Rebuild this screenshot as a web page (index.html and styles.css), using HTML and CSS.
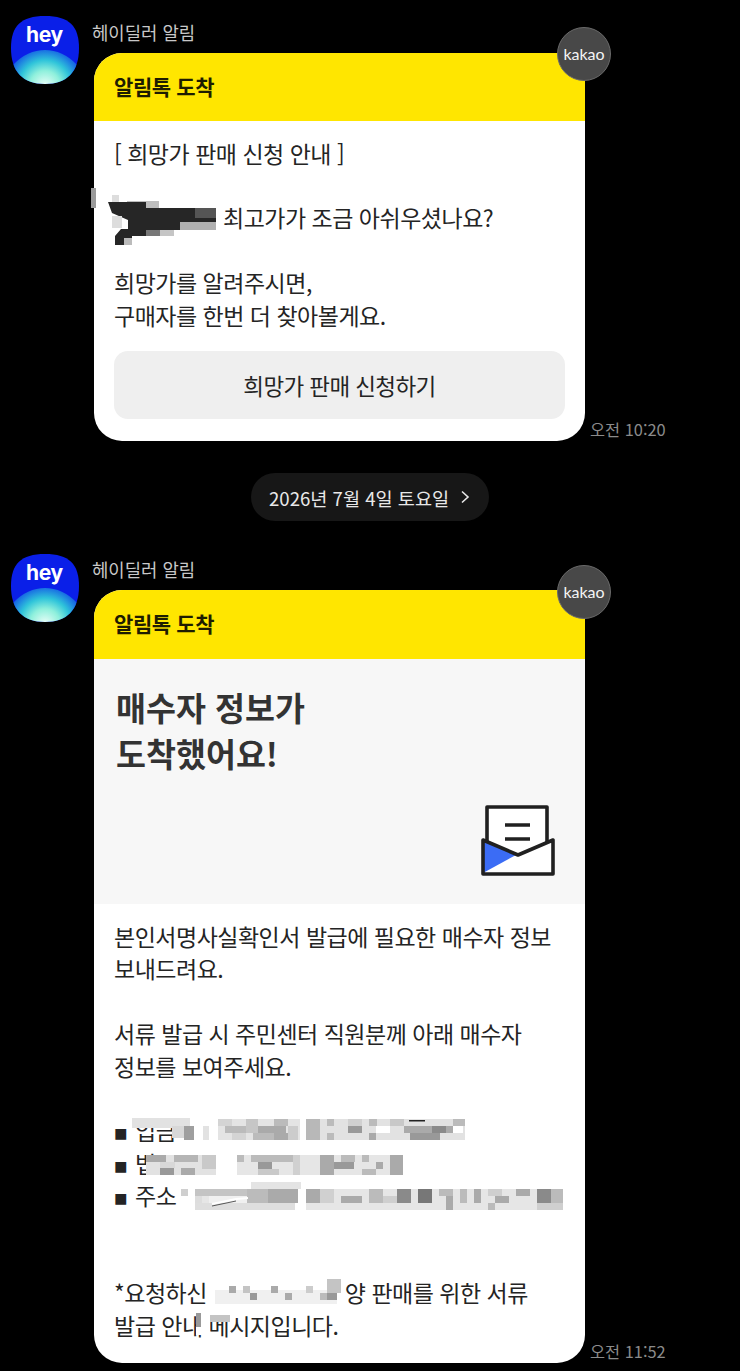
FILE: index.html
```html
<!DOCTYPE html>
<html lang="ko">
<head>
<meta charset="utf-8">
<title>헤이딜러 알림</title>
<link rel="stylesheet" href="styles.css">
</head>
<body>
<main class="chat">
  <section class="msg msg-first">
    <svg class="avatar" viewBox="0 0 68 68" aria-hidden="true">
      <defs>
        <radialGradient id="glowA" gradientUnits="userSpaceOnUse" cx="34" cy="70" r="38">
          <stop offset="0" stop-color="#eefef9"/>
          <stop offset="0.4" stop-color="#8ff0dc"/>
          <stop offset="0.68" stop-color="#2fc4da"/>
          <stop offset="1" stop-color="#1560e4"/>
        </radialGradient>
        <clipPath id="sqA"><path d="M34 0C58 0 68 10 68 32C68 56 56 68 34 68C12 68 0 56 0 32C0 10 10 0 34 0Z"/></clipPath>
      </defs>
      <path d="M34 0C58 0 68 10 68 32C68 56 56 68 34 68C12 68 0 56 0 32C0 10 10 0 34 0Z" fill="#0a1fe8"/>
      <g clip-path="url(#sqA)"><ellipse cx="34" cy="82" rx="44" ry="48" fill="url(#glowA)"/></g>
      <text x="33.5" y="26" class="hey">hey</text>
    </svg>
    <div class="msg-main">
      <div class="name">헤이딜러 알림</div>
      <div class="row">
        <article class="card">
          <header class="card-head">알림톡 도착</header>
          <div class="card-body">
            <p>[ 희망가 판매 신청 안내 ]</p>
            <p class="blank"></p>
            <p class="indent-name">최고가가 조금 아쉬우셨나요?</p>
            <p class="blank"></p>
            <p>희망가를 알려주시면,</p>
            <p>구매자를 한번 더 찾아볼게요.</p>
            <div class="action">희망가 판매 신청하기</div>
          </div>
        </article>
        <time class="time">오전 10:20</time>
        <div class="badge">kakao</div>
      </div>
    </div>
    <svg class="redact" viewBox="0 0 740 260" aria-hidden="true">
      <rect x="91" y="188" width="5" height="20" fill="#9a9a9a"/>
      <rect x="112" y="195" width="7" height="7" fill="#ddd"/>
      <rect x="127" y="201" width="32" height="7" fill="#bdbdbd"/>
      <path d="M108 202H146V208H216V226H180V230H146V236H132V245H115V236L121 229H128V220L112 213Z" fill="#262626"/>
      <rect x="195" y="208" width="21" height="10" fill="#555"/>
      <rect x="180" y="222" width="36" height="8" fill="#b0b0b0"/>
      <rect x="146" y="230" width="14" height="6" fill="#777"/>
      <rect x="160" y="230" width="14" height="6" fill="#c5c5c5"/>
      <rect x="112" y="216" width="10" height="12" fill="#ddd"/>
      <rect x="124" y="238" width="8" height="7" fill="#bbb"/>
    </svg>
  </section>

  <div class="date-wrap">
    <div class="date-pill">2026년 7월 4일 토요일
      <svg class="chev" viewBox="0 0 10 14" aria-hidden="true"><path d="M2 1.5L8 7L2 12.5"/></svg>
    </div>
  </div>

  <section class="msg msg-second">
    <svg class="avatar" viewBox="0 0 68 68" aria-hidden="true">
      <defs>
        <radialGradient id="glowB" gradientUnits="userSpaceOnUse" cx="34" cy="70" r="38">
          <stop offset="0" stop-color="#eefef9"/>
          <stop offset="0.4" stop-color="#8ff0dc"/>
          <stop offset="0.68" stop-color="#2fc4da"/>
          <stop offset="1" stop-color="#1560e4"/>
        </radialGradient>
        <clipPath id="sqB"><path d="M34 0C58 0 68 10 68 32C68 56 56 68 34 68C12 68 0 56 0 32C0 10 10 0 34 0Z"/></clipPath>
      </defs>
      <path d="M34 0C58 0 68 10 68 32C68 56 56 68 34 68C12 68 0 56 0 32C0 10 10 0 34 0Z" fill="#0a1fe8"/>
      <g clip-path="url(#sqB)"><ellipse cx="34" cy="82" rx="44" ry="48" fill="url(#glowB)"/></g>
      <text x="33.5" y="26" class="hey">hey</text>
    </svg>
    <div class="msg-main">
      <div class="name">헤이딜러 알림</div>
      <div class="row">
        <article class="card">
          <header class="card-head">알림톡 도착</header>
          <div class="hero">
            <h2 class="hero-title">매수자 정보가<br>도착했어요!</h2>
            <svg class="mail" viewBox="0 0 74 72" aria-hidden="true">
              <path d="M6 2H66V60H6Z" fill="#fff" stroke="#202020" stroke-width="3.6" stroke-linejoin="round"/>
              <path d="M24 20H49M24 34H49" stroke="#202020" stroke-width="3.4"/>
              <path d="M2 35L37 50L72 35V70H2Z" fill="#fff"/>
              <path d="M2 35L35 50L2 68Z" fill="#3b6cf5"/>
              <path d="M2 35L37 50L72 35V69H2Z" fill="none" stroke="#202020" stroke-width="3.6" stroke-linejoin="round"/>
            </svg>
          </div>
          <div class="card-body card-body-long">
            <p>본인서명사실확인서 발급에 필요한 매수자 정보</p>
            <p>보내드려요.</p>
            <p class="blank"></p>
            <p>서류 발급 시 주민센터 직원분께 아래 매수자</p>
            <p>정보를 보여주세요.</p>
            <p class="blank"></p>
            <p><span class="sq">■</span>입금</p>
            <p><span class="sq">■</span>법</p>
            <p><span class="sq">■</span>주소</p>
            <p class="blank"></p>
            <p class="blank"></p>
            <p>*요청하신 <span class="gap"></span>양 판매를 위한 서류</p>
            <p>발급 안내 메시지입니다.</p>
          </div>
        </article>
        <time class="time">오전 11:52</time>
        <div class="badge">kakao</div>
      </div>
    </div>
    <svg class="mosaic" viewBox="0 554 740 817" aria-hidden="true">
      <g fill="#d4d4d4">
        <rect x="218" y="1119" width="82" height="21" fill="#e4e4e4"/>
        <rect x="306" y="1119" width="159" height="21" fill="#e2e2e2"/>
        <rect x="132" y="1118" width="58" height="10" fill="#e2e2e2"/>
        <rect x="172" y="1126" width="12" height="12" fill="#d8d8d8"/>
        <rect x="184" y="1126" width="10" height="14" fill="#9f9f9f"/>
        <rect x="203" y="1126" width="6" height="14" fill="#e2e2e2"/>
        <rect x="218" y="1119" width="14" height="7"/><rect x="225" y="1126" width="21" height="7" fill="#bbb"/>
        <rect x="232" y="1133" width="14" height="7"/><rect x="246" y="1119" width="12" height="14" fill="#c6c6c6"/>
        <rect x="258" y="1126" width="28" height="7" fill="#aaa"/><rect x="253" y="1133" width="21" height="7" fill="#bbb"/>
        <rect x="274" y="1119" width="14" height="7" fill="#bbb"/><rect x="274" y="1133" width="14" height="7" fill="#aaa"/>
        <rect x="288" y="1126" width="10" height="14" fill="#ccc"/>
        <rect x="306" y="1119" width="14" height="21" fill="#b8b8b8"/><rect x="327" y="1119" width="7" height="7" fill="#bbb"/>
        <rect x="327" y="1133" width="7" height="7" fill="#bbb"/><rect x="348" y="1126" width="14" height="7" fill="#999"/>
        <rect x="348" y="1119" width="14" height="7" fill="#d0d0d0"/><rect x="369" y="1119" width="8" height="7" fill="#bbb"/>
        <rect x="369" y="1133" width="7" height="7" fill="#aaa"/><rect x="376" y="1126" width="14" height="7" fill="#fff"/>
        <rect x="390" y="1119" width="14" height="7" fill="#c8c8c8"/>
        <rect x="404" y="1126" width="30" height="7" fill="#aaa"/><rect x="410" y="1133" width="30" height="7" fill="#999"/>
        <rect x="432" y="1126" width="14" height="7" fill="#8a8a8a"/><rect x="453" y="1119" width="12" height="7" fill="#bbb"/>
        <rect x="446" y="1126" width="7" height="7" fill="#aaa"/><rect x="453" y="1126" width="10" height="7" fill="#fff"/>
        <rect x="409" y="1120" width="16" height="1.5" fill="#222"/>
      </g>
      <g fill="#c9c9c9">
        <rect x="146" y="1155" width="70" height="20" fill="#e2e2e2"/>
        <rect x="237" y="1155" width="166" height="20" fill="#e6e6e6"/>
        <rect x="146" y="1155" width="20" height="7" fill="#aaa"/><rect x="160" y="1162" width="15" height="6" fill="#d8d8d8"/>
        <rect x="160" y="1168" width="14" height="7" fill="#999"/><rect x="174" y="1155" width="24" height="7" fill="#b5b5b5"/>
        <rect x="181" y="1168" width="14" height="7" fill="#aaa"/><rect x="202" y="1155" width="14" height="14"/>
        <rect x="237" y="1155" width="7" height="7" fill="#bbb"/><rect x="251" y="1155" width="42" height="7" fill="#bbb"/>
        <rect x="258" y="1162" width="14" height="7" fill="#999"/><rect x="258" y="1169" width="21" height="6"/>
        <rect x="293" y="1155" width="7" height="20" fill="#d0d0d0"/><rect x="320" y="1155" width="14" height="20" fill="#aaa"/>
        <rect x="341" y="1155" width="14" height="7" fill="#bbb"/><rect x="334" y="1162" width="20" height="7" fill="#999"/>
        <rect x="362" y="1155" width="7" height="7" fill="#bbb"/><rect x="362" y="1169" width="14" height="6" fill="#bbb"/>
        <rect x="376" y="1162" width="7" height="7" fill="#aaa"/><rect x="390" y="1155" width="13" height="20" fill="#aaa"/>
      </g>
      <g fill="#cfcfcf">
        <rect x="195" y="1189" width="100" height="21" fill="#e6e6e6"/>
        <rect x="306" y="1189" width="257" height="21" fill="#e6e6e6"/>
        <rect x="181" y="1189" width="7" height="7"/><rect x="195" y="1189" width="52" height="7" fill="#c4c4c4"/>
        <rect x="195" y="1196" width="7" height="7" fill="#ddd"/><rect x="209" y="1196" width="38" height="7" fill="#f0f0f0"/>
        <rect x="195" y="1203" width="100" height="7" fill="#dedede"/><rect x="247" y="1189" width="21" height="14" fill="#bbb"/>
        <rect x="251" y="1182" width="50" height="7" fill="#e4e4e4"/><rect x="268" y="1189" width="30" height="14" fill="#aaa"/>
        <rect x="306" y="1189" width="14" height="14" fill="#aaa"/><rect x="320" y="1189" width="14" height="14" fill="#d0d0d0"/>
        <rect x="341" y="1196" width="21" height="7" fill="#aaa"/><rect x="369" y="1189" width="14" height="14" fill="#bbb"/>
        <rect x="383" y="1196" width="14" height="7"/><rect x="397" y="1189" width="14" height="14" fill="#8a8a8a"/>
        <rect x="418" y="1189" width="14" height="14" fill="#777"/><rect x="439" y="1189" width="14" height="7" fill="#bbb"/>
        <rect x="446" y="1196" width="7" height="14" fill="#aaa"/><rect x="460" y="1189" width="7" height="14" fill="#bbb"/>
        <rect x="474" y="1189" width="7" height="14" fill="#aaa"/><rect x="488" y="1189" width="14" height="7"/>
        <rect x="495" y="1196" width="14" height="7" fill="#aaa"/><rect x="516" y="1189" width="14" height="7" fill="#aaa"/>
        <rect x="537" y="1189" width="14" height="14" fill="#8a8a8a"/><rect x="551" y="1189" width="12" height="14" fill="#bbb"/>
        <rect x="537" y="1203" width="26" height="7"/><rect x="488" y="1203" width="7" height="7" fill="#bbb"/>
        <path d="M212 1204L236 1199L248 1198" fill="none" stroke="#fff" stroke-width="2"/>
        <path d="M212 1206L236 1201" fill="none" stroke="#333" stroke-width="0.8"/>
      </g>
      <g>
        <rect x="207" y="1279" width="138" height="28" fill="#fff"/>
        <rect x="215" y="1290" width="122" height="14" fill="#f0f0f0"/>
        <rect x="229" y="1286" width="7" height="7" fill="#aaa"/><rect x="243" y="1286" width="7" height="7" fill="#c4c4c4"/>
        <rect x="250" y="1293" width="7" height="7" fill="#999"/><rect x="271" y="1286" width="7" height="7" fill="#aaa"/>
        <rect x="285" y="1293" width="7" height="7" fill="#aaa"/><rect x="306" y="1286" width="7" height="7" fill="#ccc"/>
        <rect x="320" y="1293" width="7" height="7" fill="#bbb"/><rect x="327" y="1279" width="14" height="14" fill="#c4c4c4"/>
        <rect x="327" y="1293" width="10" height="7" fill="#999"/>
        <rect x="196" y="1313" width="14" height="22" fill="#fff"/>
        <rect x="196" y="1313" width="5" height="14" fill="#999"/>
        <rect x="210" y="1315" width="20" height="7" fill="#c4c4c4"/>
      </g>
    </svg>
  </section>
</main>
</body>
</html>
```
FILE: styles.css
```css
* { box-sizing: border-box; }
html, body { margin: 0; background: #000; }
body {
  width: 740px;
  height: 1371px;
  overflow: hidden;
  font-family: "Noto Sans CJK KR", "Noto Sans", sans-serif;
  color: #242424;
}
.chat { display: flex; flex-direction: column; }
.msg {
  position: relative;
  display: flex;
  gap: 13px;
  padding-left: 11px;
}
.msg-first { padding-top: 16px; }
.avatar { width: 68px; height: 68px; flex: none; }
.hey {
  font-family: "Inter", "Liberation Sans", sans-serif;
  font-size: 21px;
  font-weight: 700;
  fill: #fff;
  text-anchor: middle;
  letter-spacing: -0.3px;
}
.msg-main { display: flex; flex-direction: column; }
.name {
  height: 37px;
  font-size: 17.8px;
  line-height: 32px;
  color: #c8c8c8;
}
.msg-second .name { height: 36px; line-height: 31px; }
.row { position: relative; display: flex; align-items: flex-end; padding-left: 2px; }
.card {
  width: 491px;
  border-radius: 28px;
  overflow: hidden;
  background: #fff;
}
.card-head {
  height: 68px;
  padding-left: 20px;
  background: #ffe600;
  font-size: 21px;
  font-weight: 700;
  letter-spacing: -0.4px;
  line-height: 66px;
  color: #1e1c00;
}
.msg-second .card-head { height: 69px; }
.card-body {
  padding: 15.6px 20px 22.4px;
  font-size: 23px;
  letter-spacing: -0.5px;
  line-height: 32.4px;
}
.card-body-long { padding-bottom: 21.4px; }
.card-body p { margin: 0; white-space: nowrap; }
.blank { height: 32.4px; }
.indent-name { padding-left: 109px; }
.gap { display: inline-block; width: 132px; }
.sq {
  display: inline-block;
  width: 21px;
  font-size: 13.5px;
  line-height: 1;
  letter-spacing: 0;
  vertical-align: 1px;
}
.action {
  height: 68px;
  margin-top: 20px;
  border-radius: 14px;
  background: #efefef;
  font-size: 22.5px;
  letter-spacing: -0.6px;
  text-align: center;
  line-height: 68px;
}
.hero {
  display: flex;
  flex-direction: column;
  height: 245px;
  padding: 25px 30px 27px 22px;
  background: #f7f7f7;
}
.hero-title {
  margin: 0;
  font-size: 32.6px;
  font-weight: 700;
  line-height: 46px;
  color: #333;
}
.mail { width: 74px; height: 72px; margin-top: auto; align-self: flex-end; }
.time {
  margin: 0 0 1px 5px;
  font-size: 16.4px;
  line-height: 22px;
  color: #8b8b8b;
  white-space: nowrap;
}
.badge {
  position: absolute;
  left: 465px;
  top: -26px;
  width: 54px;
  height: 54px;
  border: 1px solid #6a6a6a;
  border-radius: 50%;
  background: #484848;
  color: #f4f4f4;
  font-family: "Lato", "Open Sans", sans-serif;
  font-size: 16px;
  line-height: 52px;
  text-align: center;
}
.msg-second .badge { top: -25px; }
.date-wrap { display: flex; justify-content: center; padding: 32px 0 33px; }
.date-pill {
  display: flex;
  align-items: center;
  gap: 11px;
  width: 238px;
  height: 48px;
  padding-left: 18px;
  border-radius: 24px;
  background: #171717;
  color: #e8e8e8;
  font-size: 18.6px;
  white-space: nowrap;
}
.chev { width: 10px; height: 14px; fill: none; stroke: #e8e8e8; stroke-width: 1.6; }
.redact, .mosaic {
  position: absolute;
  left: 0;
  width: 740px;
  pointer-events: none;
}
.redact { top: 0; height: 260px; filter: blur(0.7px); }
.mosaic { top: 0; height: 817px; filter: blur(0.7px); }
```
